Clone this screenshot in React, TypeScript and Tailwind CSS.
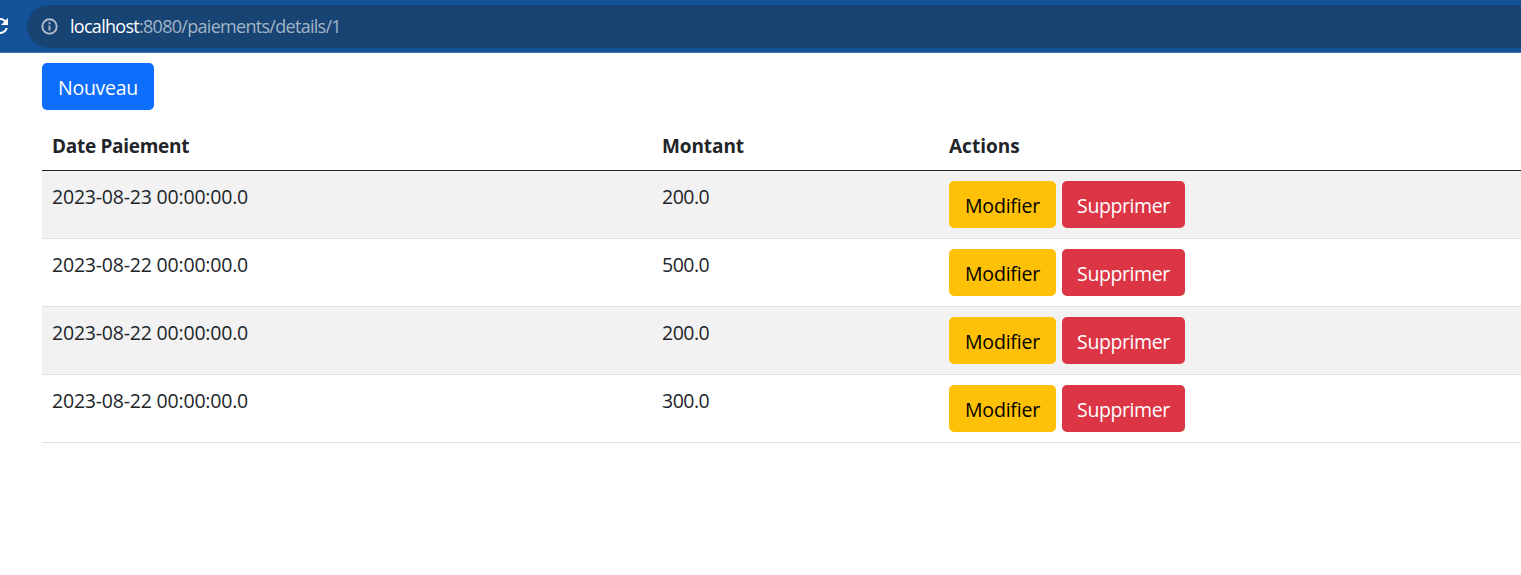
const payments = [
  { date: "2023-08-23 00:00:00.0", amount: "200.0" },
  { date: "2023-08-22 00:00:00.0", amount: "500.0" },
  { date: "2023-08-22 00:00:00.0", amount: "200.0" },
  { date: "2023-08-22 00:00:00.0", amount: "300.0" },
];

function AddressBar() {
  return (
    <header className="flex h-[53px] items-start overflow-hidden border-b border-[#4076b4] bg-[#14539a] pt-[5px]">
      <div className="flex h-[43px] w-[27px] shrink-0 items-center overflow-hidden">
        <svg viewBox="0 0 24 24" className="-ml-[12px] -mt-px size-6 shrink-0 fill-white">
          <path d="M17.65 6.35A7.96 7.96 0 0 0 12 4a8 8 0 1 0 7.73 10h-2.08A6 6 0 1 1 12 6c1.66 0 3.14.69 4.22 1.78L13 11h7V4z" />
        </svg>
      </div>
      <div className="flex h-[43px] flex-1 items-center rounded-l-full bg-[#184474] pl-[14px]">
        <svg viewBox="0 0 17 17" className="size-[17px] shrink-0" fill="none" stroke="#b0bccb" strokeWidth="1.9">
          <circle cx="8.5" cy="8.5" r="7.2" />
          <path d="M8.5 7.5v5M8.5 4.3v1.9" />
        </svg>
        <span className="-mt-px ml-[12px] whitespace-nowrap text-[18px] leading-6 tracking-[-0.71px] text-[#a3b4c7]">
          <span className="text-white">localhost</span>:8080/paiements/details/1
        </span>
      </div>
    </header>
  );
}

export default function App() {
  return (
    <div className="h-[575px] w-full overflow-hidden bg-white font-['Open_Sans','Noto_Sans',sans-serif] text-[19.5px] leading-[30px] tracking-[-0.2px] text-[#212529]">
      <AddressBar />
      <main className="pl-[42px] pt-[10px]">
        <button className="flex h-[47px] w-[112px] items-center justify-center rounded-[5px] bg-[#0d6efd] pt-[3px] tracking-[-0.3px] text-white">
          Nouveau
        </button>
        <table className="mt-[10px] w-full table-fixed border-separate border-spacing-0 text-left">
          <colgroup>
            <col className="w-[610px]" />
            <col className="w-[287px]" />
            <col />
          </colgroup>
          <thead>
            <tr className="h-[51px] text-[19px]">
              <th className="border-b border-[#212529] px-[10px] pt-px font-bold tracking-[-0.3px]">Date Paiement</th>
              <th className="border-b border-[#212529] px-[10px] pt-px font-bold tracking-[-0.1px]">Montant</th>
              <th className="border-b border-[#212529] px-[10px] pt-px font-bold tracking-[0px]">Actions</th>
            </tr>
          </thead>
          <tbody>
            {payments.map((payment, index) => (
              <tr key={index} className="h-[68px] align-top odd:bg-[#f2f2f2]">
                <td className="border-b border-[#dee2e6] px-[10px] pt-[11px]">{payment.date}</td>
                <td className="border-b border-[#dee2e6] px-[10px] pt-[11px] tracking-[-0.5px]">{payment.amount}</td>
                <td className="border-b border-[#dee2e6] p-[10px]">
                  <div className="flex gap-[6px]">
                    <button className="flex h-[47px] w-[107px] items-center justify-center rounded-[5px] bg-[#ffc107] pt-[3px] text-black">
                      Modifier
                    </button>
                    <button className="flex h-[47px] w-[123px] items-center justify-center rounded-[5px] bg-[#dc3545] pt-[3px] tracking-[-0.4px] text-white">
                      Supprimer
                    </button>
                  </div>
                </td>
              </tr>
            ))}
          </tbody>
        </table>
      </main>
    </div>
  );
}
